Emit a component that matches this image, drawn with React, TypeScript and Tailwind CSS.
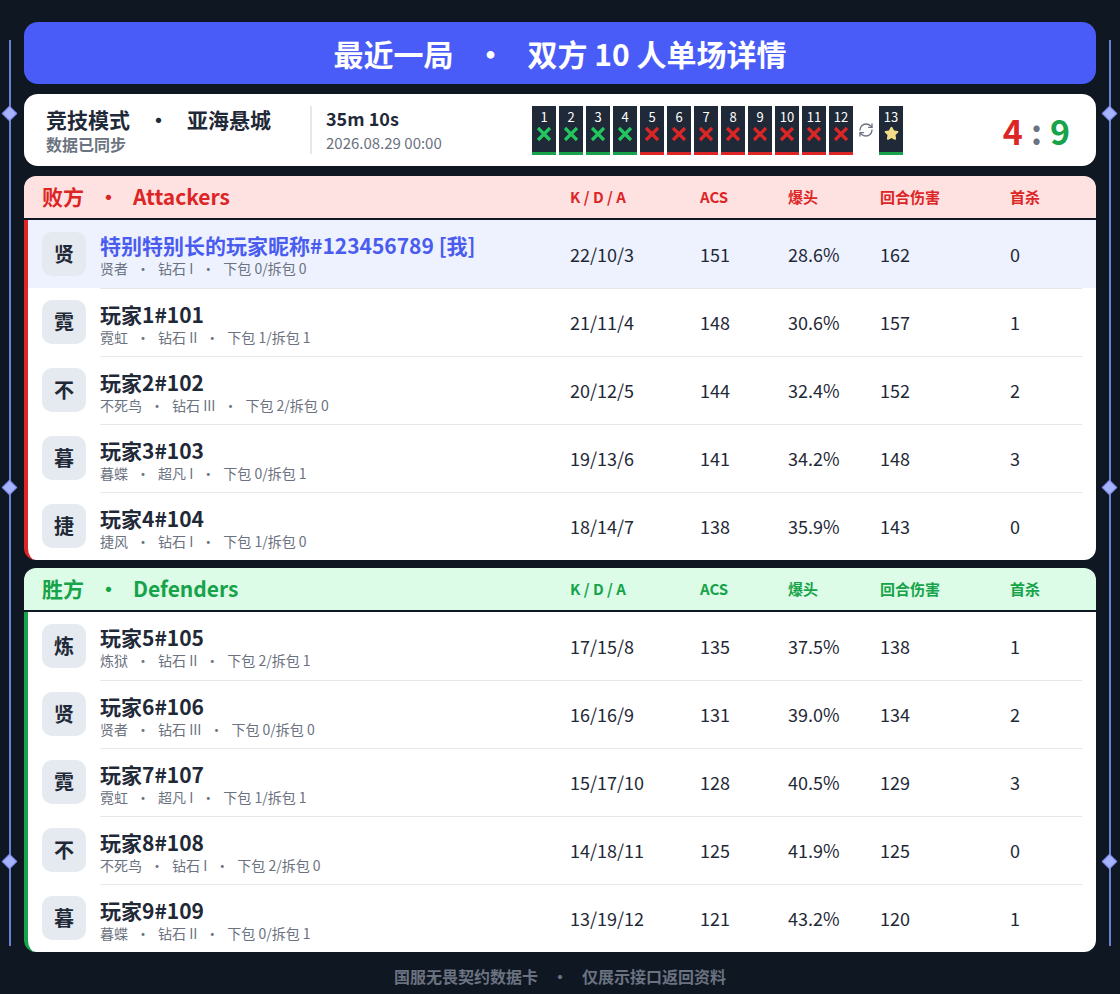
import { Star, RefreshCw } from 'lucide-react';

const FONT = { fontFamily: '"Noto Sans CJK SC", "Noto Sans", sans-serif' };

type P = { a: string; name: string; sub: string; kda: string; acs: number; hs: string; adr: number; fk: number; me?: boolean };

const attackers: P[] = [
  { a: '贤', name: '特别特别长的玩家昵称#123456789  [我]', sub: '贤者 · 钻石 I · 下包 0/拆包 0', kda: '22/10/3', acs: 151, hs: '28.6%', adr: 162, fk: 0, me: true },
  { a: '霓', name: '玩家1#101', sub: '霓虹 · 钻石 II · 下包 1/拆包 1', kda: '21/11/4', acs: 148, hs: '30.6%', adr: 157, fk: 1 },
  { a: '不', name: '玩家2#102', sub: '不死鸟 · 钻石 III · 下包 2/拆包 0', kda: '20/12/5', acs: 144, hs: '32.4%', adr: 152, fk: 2 },
  { a: '暮', name: '玩家3#103', sub: '暮蝶 · 超凡 I · 下包 0/拆包 1', kda: '19/13/6', acs: 141, hs: '34.2%', adr: 148, fk: 3 },
  { a: '捷', name: '玩家4#104', sub: '捷风 · 钻石 I · 下包 1/拆包 0', kda: '18/14/7', acs: 138, hs: '35.9%', adr: 143, fk: 0 },
];
const defenders: P[] = [
  { a: '炼', name: '玩家5#105', sub: '炼狱 · 钻石 II · 下包 2/拆包 1', kda: '17/15/8', acs: 135, hs: '37.5%', adr: 138, fk: 1 },
  { a: '贤', name: '玩家6#106', sub: '贤者 · 钻石 III · 下包 0/拆包 0', kda: '16/16/9', acs: 131, hs: '39.0%', adr: 134, fk: 2 },
  { a: '霓', name: '玩家7#107', sub: '霓虹 · 超凡 I · 下包 1/拆包 1', kda: '15/17/10', acs: 128, hs: '40.5%', adr: 129, fk: 3 },
  { a: '不', name: '玩家8#108', sub: '不死鸟 · 钻石 I · 下包 2/拆包 0', kda: '14/18/11', acs: 125, hs: '41.9%', adr: 125, fk: 0 },
  { a: '暮', name: '玩家9#109', sub: '暮蝶 · 钻石 II · 下包 0/拆包 1', kda: '13/19/12', acs: 121, hs: '43.2%', adr: 120, fk: 1 },
];

function Sub({ s }: { s: string }) {
  const parts = s.split(' · ');
  return (
    <div className="text-[14px] leading-[18px] text-[#6b7280]">
      {parts.map((p, i) => (
        <span key={i}>{i > 0 && <span className="mx-[8px]">·</span>}{p}</span>
      ))}
    </div>
  );
}

function Cols({ cls }: { cls: string }) {
  return (
    <>
      <div className={`w-[130px] ${cls}`}>K / D / A</div>
      <div className={`w-[88px] ${cls}`}>ACS</div>
      <div className={`w-[92px] ${cls}`}>爆头</div>
      <div className={`w-[130px] ${cls}`}>回合伤害</div>
      <div className={cls}>首杀</div>
    </>
  );
}

function Team({ title, en, color, head, players }: { title: string; en: string; color: string; head: string; players: P[] }) {
  return (
    <div>
      <div className={`flex h-[42px] items-center rounded-t-[12px] ${head} px-[18px]`}>
        <div className={`w-[528px] text-[21px] font-bold ${color}`}>{title}<span className="mx-[14px]">·</span>{en}</div>
        <Cols cls={`text-[15px] font-semibold ${color}`} />
      </div>
      <div className={`mt-[2px] rounded-b-[12px] bg-white border-l-[4px] ${color === 'text-[#dc2626]' ? 'border-[#dc2626]' : 'border-[#16a34a]'} overflow-hidden`}>
        {players.map((p, i) => (
          <div key={i} className={`flex h-[68px] items-center px-[14px] ${p.me ? 'bg-[#eef2ff]' : ''}`}>
            <div className="flex h-[44px] w-[44px] items-center justify-center rounded-[10px] bg-[#e5e9f0] text-[20px] font-bold text-[#1f2937]">{p.a}</div>
            <div className={`ml-[14px] flex h-full w-[470px] flex-col justify-center ${i > 0 ? 'border-t border-[#e5e7eb]' : ''}`}>
              <div className={`text-[21px] font-semibold leading-[28px] ${p.me ? 'text-[#4a5cf0]' : 'text-[#1f2937]'}`}>{p.name}</div>
              <Sub s={p.sub} />
            </div>
            <div className={`flex h-full flex-1 items-center text-[18px] text-[#1f2937] ${i > 0 ? 'border-t border-[#e5e7eb]' : ''}`}>
              <div className="w-[130px]">{p.kda}</div>
              <div className="w-[88px]">{p.acs}</div>
              <div className="w-[92px]">{p.hs}</div>
              <div className="w-[130px]">{p.adr}</div>
              <div>{p.fk}</div>
            </div>
          </div>
        ))}
      </div>
    </div>
  );
}

function Cross({ c }: { c: string }) {
  return (
    <svg width="18" height="16" viewBox="0 0 18 16">
      <path d="M3 2l12 12M15 2L3 14" stroke={c} strokeWidth="3.2" />
    </svg>
  );
}

function Diamond({ top }: { top: number }) {
  return <div className="absolute left-[4px] h-[11px] w-[11px] rotate-45 border border-[#818cf8] bg-[#a5b4fc]" style={{ top }} />;
}

export default function App() {
  const rounds = Array.from({ length: 12 }, (_, i) => i + 1);
  return (
    <div className="relative min-h-[994px] w-[1120px] bg-[#0f1722] px-[24px] pt-[22px]" style={FONT}>
      {/* side decorations */}
      <div className="pointer-events-none absolute left-0 top-0 h-full w-[20px]">
        <div className="absolute left-[9px] top-[40px] h-[906px] w-[1.5px] bg-[#6b7fd8]" />
        <Diamond top={108} /><Diamond top={482} /><Diamond top={856} />
      </div>
      <div className="pointer-events-none absolute right-0 top-0 h-full w-[20px]">
        <div className="absolute left-[9px] top-[40px] h-[906px] w-[1.5px] bg-[#6b7fd8]" />
        <Diamond top={108} /><Diamond top={482} /><Diamond top={856} />
      </div>

      <div className="flex h-[62px] items-center justify-center rounded-[14px] bg-[#4a5cf7] text-[30px] font-bold text-white">
        最近一局<span className="mx-[22px]">·</span>双方 10 人单场详情
      </div>

      <div className="mt-[10px] flex h-[72px] items-center rounded-[14px] bg-white pl-[22px] pr-[26px]">
        <div className="w-[264px]">
          <div className="text-[21px] font-bold leading-[28px] text-[#1f2937]">竞技模式<span className="mx-[18px]">·</span>亚海悬城</div>
          <div className="text-[16px] font-semibold leading-[22px] text-[#6b7280]">数据已同步</div>
        </div>
        <div className="h-[48px] w-[2px] bg-[#e5e7eb]" />
        <div className="ml-[14px] w-[206px]">
          <div className="text-[18px] font-semibold leading-[26px] text-[#1f2937]">35m 10s</div>
          <div className="text-[15px] leading-[24px] text-[#6b7280]">2026.08.29 00:00</div>
        </div>
        <div className="flex items-center gap-[3px]">
          {rounds.map(r => (
            <div key={r} className={`flex h-[49px] w-[24px] flex-col items-center bg-[#1f2937] border-b-[3px] ${r <= 4 ? 'border-[#16a34a]' : 'border-[#dc2626]'}`}>
              <div className="mt-[2px] text-[13px] leading-[18px] text-white">{r}</div>
              <Cross c={r <= 4 ? '#22c55e' : '#dc2626'} />
            </div>
          ))}
          <RefreshCw size={16} className="mx-[2px] text-[#6b7280]" />
          <div className="flex h-[49px] w-[24px] flex-col items-center border-b-[3px] border-[#16a34a] bg-[#1f2937]">
            <div className="mt-[2px] text-[13px] leading-[18px] text-white">13</div>
            <Star size={15} fill="#f2dc87" stroke="#f2dc87" />
          </div>
        </div>
        <div className="ml-auto text-[34px] font-bold">
          <span className="text-[#dc2626]">4</span>
          <span className="mx-[8px] text-[#6b7280]">:</span>
          <span className="text-[#16a34a]">9</span>
        </div>
      </div>

      <div className="mt-[10px]">
        <Team title="败方" en="Attackers" color="text-[#dc2626]" head="bg-[#fee2e2]" players={attackers} />
      </div>
      <div className="mt-[8px]">
        <Team title="胜方" en="Defenders" color="text-[#16a34a]" head="bg-[#dcfce7]" players={defenders} />
      </div>

      <div className="mt-[12px] text-center text-[16px] font-semibold text-[#6b7280]">
        国服无畏契约数据卡<span className="mx-[14px]">·</span>仅展示接口返回资料
      </div>
    </div>
  );
}
